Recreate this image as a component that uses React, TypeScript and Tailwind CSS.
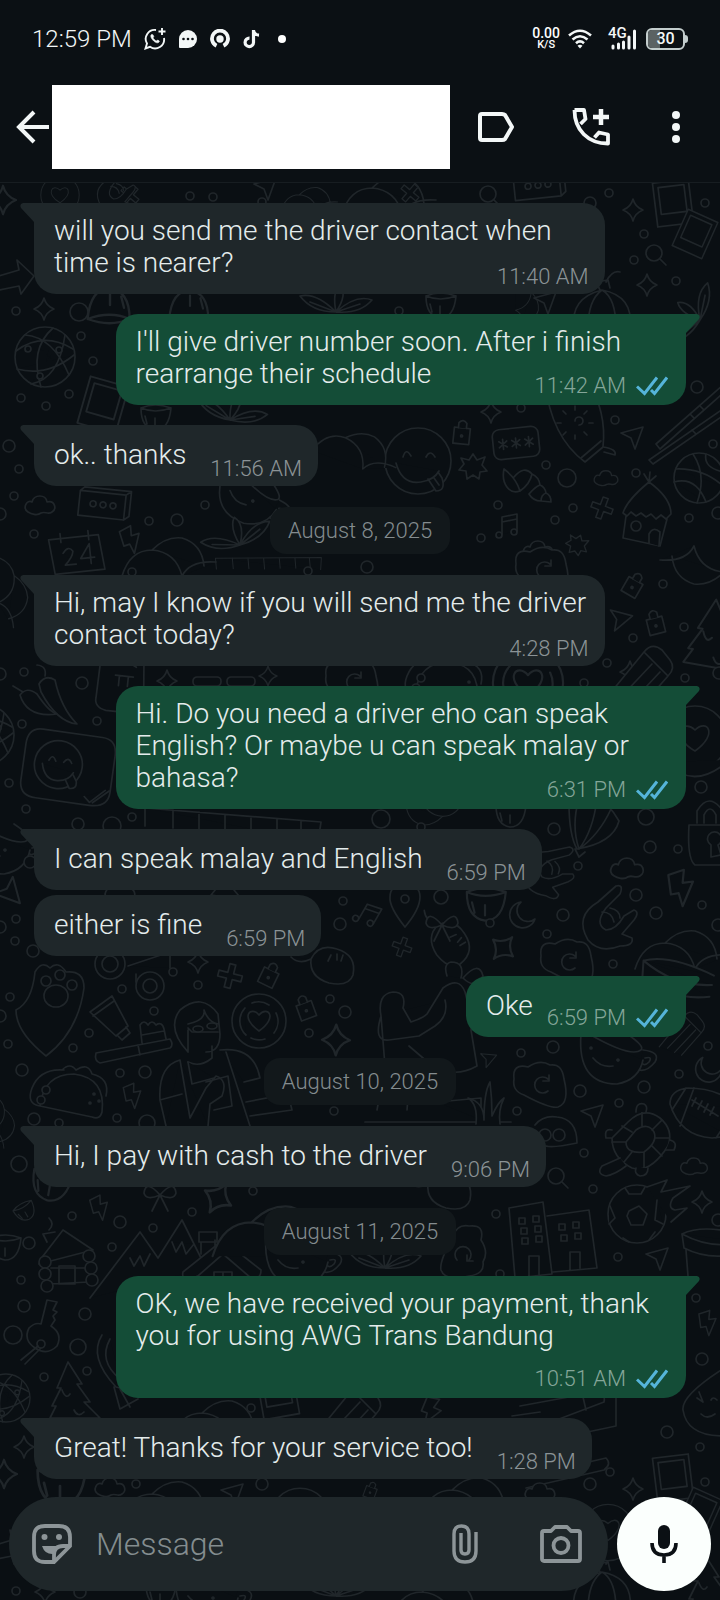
import { ReactNode } from "react";

type Message = {
 lines: string[];
 time: string;
 sent?: boolean;
 noTail?: boolean;
 timeBelow?: boolean;
};

type Group = { date?: string; messages: Message[] };

const groups: Group[] = [
 {
  messages: [
   { lines: ["will you send me the driver contact when", "time is nearer?"], time: "11:40 AM" },
   { lines: ["I'll give driver number soon. After i finish", "rearrange their schedule"], time: "11:42 AM", sent: true },
   { lines: ["ok.. thanks"], time: "11:56 AM" },
  ],
 },
 {
  date: "August 8, 2025",
  messages: [
   { lines: ["Hi, may I know if you will send me the driver", "contact today?"], time: "4:28 PM" },
   { lines: ["Hi. Do you need a driver eho can speak", "English? Or maybe u can speak malay or", "bahasa?"], time: "6:31 PM", sent: true },
   { lines: ["I can speak malay and English"], time: "6:59 PM" },
   { lines: ["either is fine"], time: "6:59 PM", noTail: true },
   { lines: ["Oke"], time: "6:59 PM", sent: true },
  ],
 },
 {
  date: "August 10, 2025",
  messages: [{ lines: ["Hi, I pay with cash to the driver"], time: "9:06 PM" }],
 },
 {
  date: "August 11, 2025",
  messages: [
   { lines: ["OK, we have received your payment, thank", "you for using AWG Trans Bandung"], time: "10:51 AM", sent: true, timeBelow: true },
   { lines: ["Great! Thanks for your service too!"], time: "1:28 PM" },
  ],
 },
];

// Wallpaper shapes, each drawn around 0,0
const shapes: Record<string, ReactNode> = {
 sparkle: <path d="M0-11Q2-3 10 0Q2 3 0 11Q-2 3-10 0Q-2-3 0-11Z" />,
 bolt: <path d="M-9-10L3-14L2-4L10-5L2 14L-1 4L-7 5Z" />,
 cloud: <path d="M-12 7C-18 3-13-6-8-3C-6-11 6-11 7-3C15-5 17 4 12 7C8 10 5 6 1 8C-3 11-9 9-12 7Z" />,
 plane: <path d="M-11-4L11-10L3 12L-1 1Z" />,
 moon: <path d="M-2-13A13 13 0 1 0 12 4A10 10 0 0 1-2-13Z" />,
 lock: (
  <>
   <path d="M-8-4H8V12H-8Z" />
   <path d="M-4-4V-9Q0-14 4-9V-4" />
   <circle cy="4" r="1" />
  </>
 ),
 cross: <path d="M-3-12H3V-3H12V3H3V12H-3V3H-12V-3H-3Z" />,
 glass: (
  <>
   <circle r="8" />
   <path d="M6 6L12 12" />
  </>
 ),
 photo: (
  <>
   <path d="M-18-22H18V22H-18Z" />
   <path d="M-13-17H13V10H-13Z" />
  </>
 ),
 tongue: (
  <>
   <circle r="33" />
   <path d="M-15-4Q-12-14-7-5M8-4Q12-12 17-4M-22 2Q-16 24 3 21Q16 19 21 10M10 18L18 30Q28 30 24 17L20 11M16 17L21 24" />
  </>
 ),
 globe: (
  <>
   <circle r="30" />
   <path d="M-20-22Q8-20 24 18M8-29Q-16-8-4 30M-29-6Q-2-26 28-8M-28 12Q2 20 29-2M-14 27Q14 22 20-22" />
   <circle cx="-17" cy="-8" r="3" />
   <circle cx="14" cy="-7" r="3" />
   <circle cx="-5" cy="19" r="3" />
  </>
 ),
 basketball: (
  <>
   <circle r="25" />
   <path d="M-23-9Q4-10 24 8M-6-24Q8-3-2 25M-25 4Q-3-2 7 24M7-24Q4-10 25-6" />
  </>
 ),
 password: (
  <>
   <rect x="-23" y="-15" width="46" height="30" rx="7" />
   <path d="M-13-5V5M-17-3L-9 3M-9-3L-17 3M0-5V5M-4-3L4 3M4-3L-4 3M13-5V5M9-3L17 3M17-3L9 3" />
  </>
 ),
 dotsBox: (
  <>
   <path d="M-26-12H20V13H-26ZM-26-12L-22-16H25L20-12M25-16V9L20 13" />
   <circle cx="-12" r="3" />
   <circle cx="-2" r="3" />
   <circle cx="8" r="3" />
  </>
 ),
 calendar: (
  <>
   <path d="M-26-15H24L27 20H-23Z" />
   <path d="M-14-20V-11M14-20V-11M-13 0Q-7-8-3-1Q-4 5-12 12H-1M14 13V-7L4 7H18" />
  </>
 ),
 shell: <path d="M-23-16C-26-2-18 10-7 6C-10-4-15-10-23-16ZM-13-8Q-3-20 5-11Q12-8 13 0Q18 2 19 8Q24 10 24 17L14 16Q6 16 2 9M5-11Q3-1-7 6M13 0Q8 2 2 9M19 8Q14 10 14 16" />,
 hut: (
  <>
   <path d="M-24 3Q-20-10 2-28M2-28Q24-12 24 4L19 9L14 5L9 9L4 4L-1 7L-6 3L-11 6L-16 2L-20 6L-24 3M-21 6L-24 28L13 36L20 9" />
   <path d="M2-28L-3-36M2-28L3-38M2-28L9-34" />
   <circle cx="-11" cy="16" r="5" />
   <path d="M2 33V24Q6 16 13 22L12 36" />
  </>
 ),
 note: (
  <>
   <path d="M-6 8V-9L9-12V5M-6-4L9-7" />
   <circle cx="-9" cy="9" r="3" />
   <circle cx="6" cy="6" r="3" />
  </>
 ),
 burst: <path d="M0-13L4-7L12-10L9-2L14 4L7 5L6 12L0 8L-6 12L-7 4L-14 3L-9-3L-12-9L-4-7Z" />,
 surf: (
  <>
   <path d="M-30-45Q-24 10 10 35L28 20Q32-15 12-48" />
   <path d="M6 31L26 14M28 20Q42 22 40 28L29 25" />
   <path d="M0-6A4 4 0 1 1 4-2M0-17V-21M0 12V8M-14-4H-18M14-4H18M-9-13L-12-16M9-13L12-16M-9 5L-12 8M9 5L12 8" />
  </>
 ),
 chopsticks: <path d="M-34 24L34-36L39-32L-30 29ZM-41 40L40-16L44-12L-37 44Z M0-6L4-2M10-14L14-10M2 10L6 14" />,
 chilli: (
  <>
   <path d="M-16-16Q-10-26 0-20Q6 8 22 24Q2 22-14-8Z" />
   <path d="M-35-5Q-28-14-18-6Q-6 12 2 14Q-28 18-35-5ZM-10-24Q-8-34-18-35M-32-8L-42-14" />
  </>
 ),
 sticker: (
  <>
   <path d="M-30-35H30Q45-35 45-18V18Q45 34 26 34H-28Q-45 34-45 18V-18Q-45-35-30-35Z" />
   <circle cx="-10" cy="-2" r="24" />
   <path d="M-20-5Q-17-13-13-5M-5-5Q-1-12 3-5M-26-1Q-22 15-9 14Q2 13 6 4M-1 12L4 20Q12 20 10 12L6 6M20 26L26 31L40 17M29 31L44 17" />
  </>
 ),
 crossword: <path d="M-90-14L86 0L83 20M-90-14V4M-62-12V6M-36-10V8M-10-7V11M16-5V12M42-3V14M66-1V16" />,
 pill: <rect x="-14" y="-4" width="28" height="9" rx="4" />,
 catcard: <path d="M-24-30H18L24 32H-14Q-26 30-25 20ZM-12-20L-6-17L-12-14M12-20L6-17L12-14M-8-4H10M-4-4V6M5-4V6" />,
 eraser: <path d="M-34 24L2-20Q10-30 20-22L28-12Q34-4 26 4L-2 36M2-20L26 4M-22 26L10-8M-12 32L18 0" />,
 heartMug: (
  <>
   <circle r="32" />
   <path d="M0 13C-26-2-12-20 0-8C12-20 24-4 0 13Z" />
   <path d="M-31 24Q0 54 34 22" />
  </>
 ),
 padlock: (
  <>
   <path d="M-24-10H24V30H-18Q-26 24-24-10ZM-16-12V-24Q-4-44 10-24V-12M-9-12V-20Q-3-32 3-20V-12" />
   <path d="M-2 22V10A7 7 0 1 1 5 10L8 20Z" />
  </>
 ),
 pin: (
  <>
   <path d="M0 22Q-16 2-15-8A15 15 0 0 1 15-8Q15 4 0 22Z" />
   <circle cy="-6" r="4" />
  </>
 ),
 rock: <path d="M-20 20Q-34-4-10-18L8-34Q16-36 12-26L-2-12Q-14 4-2 10Q8 10 16-4L26-10Q32-8 26 0L14 14L24 18Q26 26 12 26Q-8 34-20 20ZM-6-8Q4-8 6 2M2-12Q12-10 12-2" />,
 balloon: <path d="M-24-22Q-24 10-16 24Q20 18 26-4Q6-40-24-22M-14-26Q-22 0-14 24M4-26Q0 6-14 24M18-16Q6 10-14 24M-18 24L-14 32L-8 27" />,
 domes: <path d="M-48 24Q-40-2-18-2Q6 0 12 24M-18-2Q-4-16 12-14Q32-8 34 14M12 24Q20 8 46 10" />,
 paw: (
  <>
   <path d="M-15-38Q-8-50 0-42Q8-50 16-38Q34-40 34-22Q28 22-4 46Q-34 22-34 0Q-18-8-15-38Z" />
   <ellipse cx="6" cy="-14" rx="12" ry="11" />
   <circle cx="-4" cy="-29" r="5" />
   <circle cx="10" cy="-35" r="5" />
   <circle cx="22" cy="-25" r="5" />
  </>
 ),
 tube: <path d="M-22-6L0-22L16 8L4 18ZM-19-2L2-17M6 18L10 22L18 15L14 9" />,
 taco: (
  <>
   <path d="M-30 14Q-26-18 4-18Q36-14 32 20Q30 28 22 25ZM-30 14Q-44 12-38-4Q-30-24-6-22M-8-22Q0-30 6-22Q18-30 22-18Q40-14 36 4" />
   <circle cx="24" cy="2" r="1" />
   <circle cx="20" cy="11" r="1" />
   <circle cx="29" cy="9" r="1" />
   <circle cx="-24" cy="-2" r="4" />
   <circle cx="-29" cy="8" r="4" />
  </>
 ),
 brush: <path d="M-38 0L36-14Q40-8 36-5L-34 10Q-40 8-38 0ZM4-8L6 2M8-10L6-28Q10-34 14-28Q18-34 22-28Q28-32 30-24L32-14M8-18L30-22" />,
 reader: (
  <>
   <path d="M-12-8Q-34-32-20-50Q2-68 18-46L20-26Q20-8 6-8M-12-30V-8M-12 2Q0 8 12-2V-14M-12-32L-8-28H18M-12-36Q6-40 4-50Q8-38 18-36" />
   <ellipse cx="-2" cy="-31" rx="5" ry="3" />
   <ellipse cx="12" cy="-34" rx="5" ry="3" />
   <path d="M-20 0Q-42 6-40 40L-34 66M20-10Q54-14 60 18L44 22M-20 0L-10 58L6 28L16 16Q28 20 22 36L10 44L8 66M26-8L50 66M-12 2L-8 24L14 18M6 22L28 16L32 46L14 50M-40 40L-18 34M46 42L88 34L92 50L50 56" />
  </>
 ),
 heartCoin: (
  <>
   <circle r="27" />
   <path d="M-13 14A19 19 0 0 1-14-13M-7-18A19 19 0 0 1 10-16M17-8A19 19 0 0 1 15 12M6 18A19 19 0 0 1-8 17M0 10C-20-4-8-16 0-6C8-16 20-4 0 10Z" />
  </>
 ),
 camera: (
  <>
   <circle cx="-26" r="15" />
   <circle cx="-26" r="8" />
   <circle cx="14" cy="22" r="14" />
   <circle cx="14" cy="22" r="7" />
   <path d="M-8 2L34-12V4M0 10V18" />
  </>
 ),
 bag: <path d="M-22-8Q-14-24 4-18Q24-12 20 8Q16 20-4 16Q-24 10-22-8ZM-2-12L-5-6M4-13V-7M10-12L8-6M-22-8Q-34-2-42-10" />,
 tree: <path d="M0-30L14-8L9-8L22 10L16 10L32 26H-18L-12 14L-16 14L-7-4L-11-4ZM-6-2Q-2 8 2 2M6 18Q10 26 16 20" />,
 hills: <path d="M-50 36L0-30L18-4L42-42L66 6M-10-4L-6 4L0-6L4 4L10-8M32-20L36-10L42-20L46-8L54-18" />,
 cottage: <path d="M-40 10L0-22L38 8Q38 18 28 16L0-8L-32 20Q-42 18-40 10ZM-26 14V36M26 14V36M-9 10H9V28H-9ZM0 10V28M-9 19H9M-22-8V-20M-8-16V-22M-24-20H-6V-30H-24Z" />,
 cabin: (
  <>
   <path d="M-24 0L-4-26L26-6L-28 8ZM-20-14L-24-22L-12-24M-18-26Q-12-32-18-38M-16 12H20M-18 28L22 26M-8 10H8V28H-8Z" />
   <circle cx="-22" cy="6" r="6" />
   <circle cx="-22" cy="18" r="6" />
   <circle cx="-20" cy="30" r="6" />
   <circle cx="22" cy="0" r="6" />
   <circle cx="24" cy="12" r="6" />
   <circle cx="25" cy="24" r="6" />
  </>
 ),
 egg: (
  <>
   <path d="M-24-6Q-26-22-10-18Q2-26 12-20Q24-22 26-6Q32 18 20 22Q12 24-14 10Q-26 6-24-6Z" />
   <path d="M10-6A8 8 0 1 0 10 6M11-10V-4H5" />
  </>
 ),
 cup: (
  <>
   <path d="M-34-26Q-38 24 2 24Q24 20 28 0M-26-26Q16-2 26-10Q30-14 12-26M28-10Q46-8 40 2Q32 12 24 10M30-2Q38-4 34 2Q30 6 28 4M-22-2Q-14 8-2 6" />
   <circle cx="-24" cy="-12" r="1" />
   <circle cx="3" r="1" />
  </>
 ),
 football: <path d="M-30-8Q-30-22-12-24Q20-24 40-4M-30-8Q-20 24 12 26L30 24M-14-24L-28-2M-6-24L-20 14M36-4L16 26M-8-12L18 4M-4-14L-8-6M2-11L-2-3M8-8L4 0M14-5L10 3" />,
 turtle: (
  <>
   <path d="M-12-18Q4-34 20-22Q34-10 28 6Q10 34-8 28Q-28 18-28-2Z" />
   <path d="M-4-10Q8-18 14-8Q18 2 4 12Q-14 14-14 2ZM2-29V-14M-18-14L-8-8M-28 2H-14M-16 22L-8 12M4 28V12M22 16L12 6M29-2L15-2M22-20L12-10" />
   <path d="M-4-28Q-4-38 4-36Q8-34 6-28M-28-10Q-36-12-34-2H-28M30 0Q38 2 34 10L26 10M8 28Q8 36 0 36Q-6 34-4 28M-20 18L-38 26Q-44 34-34 36Q-24 34-14 26" />
  </>
 ),
 soccer: (
  <>
   <circle r="29" />
   <path d="M-8-3L2-8L10 0L6 11H-6L-10 2ZM-12-26L-8-20L4-20L8-27M20-14L18 6L26 10M-27-8L-22 4L-28 10M-14 24L-8 28M12 26L18 18M10-27L30-34L24-22L53-28L36-16Q30-6 38-4L50-6L34 8" />
  </>
 ),
 buildings: <path d="M-44-30L-10-36L-1 36L-38 40ZM-6-22L36-28L44 30L0 34M-34-20H-28V-14H-34ZM-20-22H-14V-16H-20ZM-32-10H-26V-4H-32ZM-18-12H-12V-6H-18ZM-31 0H-25V6H-31ZM-17-2H-11V4H-17ZM6-14H12V-8H6ZM20-16H26V-10H20ZM8-3H14V3H8ZM22-5H28V1H22ZM-24 38V18H-14V36M17 32V14H27V30" />,
 bucket: <path d="M-20-8Q0-18 40-8M-20-8L-18 6Q10 20 40 10M-20-8Q10 8 40 0M-16 8L-14 34" />,
 ghost: (
  <>
   <path d="M-22-8Q-14-18 0-16Q20-14 20 10Q-8 16-14 12" />
   <circle cx="-12" cy="2" r="6" />
   <circle cx="2" cy="2" r="6" />
  </>
 ),
 grass: <path d="M-14 22Q-12 2-22-4Q-6 0-6 18Q-6-10 0-20Q2-4 2 14Q8 0 14-4Q8 8 10 22" />,
 woman: <path d="M-40 30L-44-20Q-48-42-32-44Q-18-44-22-28L-14-14Q-2-18 2-22L18-48Q34-60 40-44Q48-14 46-6L52 30Q34 40 18 34L12 66M20-36Q24-20 10-10L-6 0L-36 4Q-52 6-44-20M-16 10L12 34M8 36L-14 24L-18 74M-40 30L-48 74M22-60Q18-72 26-74Q40-74 36-58M38-58Q54-76 58-60Q50-46 38-58M12 66L56 62V84M-60 86H86" />,
 key: (
  <>
   <path d="M-14-2Q-8-8-2-6L4-30L14-28L10-20L14-18L10-14L12-10L8-4Q20 4 14 16Q4 26-8 18Q-20 10-14-2Z" />
   <circle cx="-2" cy="14" r="4" />
   <path d="M-5 16L-22 30M-2 18L-18 34" />
  </>
 ),
 hotair: <path d="M-20-30Q-34-8-6 22L10 26M-12-26Q-24-4-2 14M-8 22L-2 44L16 34M-2 24L8 42" />,
 board: <path d="M-40-10L36-24Q46-24 44-14L-30 14M-48 0L-20-4M-38-20L40-34Q56-36 56-20V10L-20 26M20-32L26-6M-40 62L46 42Q52 48 44 54L-34 72M-20 26L-4 50" />,
 baby: (
  <>
   <circle r="16" />
   <path d="M14-36Q-26-10-24 4Q-20 30 16 30M-10-8L-4-4L-8-14M4-6Q6-10 10-6M-6 8Q0 14 8 8" />
  </>
 ),
 arrow: <path d="M-18-4L2-10L0-20L17-4L4 14L2 6L-18 10" />,
 mug: <path d="M-14-10Q0-16 16-10Q14 12 0 12Q-14 10-14-10ZM-14-10Q0-4 16-10M-10-2L-8 6M0 0V8" />,
 leaf: <path d="M0 0Q-20-20-36-16Q-24 0 0 0Q-4-20 4-28Q12-18 0 0Q20-18 36-12Q24 2 0 0M-26-10L0 0M24-8L0 0" />,
 pumpkin: <path d="M-28 22Q-32-8 0-16Q32-10 28 22M-14 22Q-14-6 0-16Q14-8 14 22M-2-16L-6-24L6-26L8-18M4-24Q10-36 18-34" />,
 bow: <path d="M0 0Q-14-16-16-2Q-14 6 0 0Q14-16 16-2Q14 6 0 0L-8 16M0 0L8 16" />,
};

const doodles: [string, number, number, number?, number?][] = [
 ["sparkle", 44, 309], ["sparkle", 633, 210], ["sparkle", 647, 285], ["sparkle", 491, 412], ["sparkle", 167, 681],
 ["sparkle", 630, 672], ["sparkle", 336, 1040, 1, 1.4], ["sparkle", 198, 962], ["sparkle", 702, 1202], ["sparkle", 24, 1447], ["sparkle", 633, 1489],
 ["sparkle", 45, 1592], ["sparkle", 3, 200, 0, 1.3], ["sparkle", 4, 1474, 0, 1.3],
 ["globe", 45, 357], ["arrow", 17, 280], ["mug", 155, 418], ["leaf", 336, 312], ["pumpkin", 602, 306], ["pumpkin", 602, 1588],
 ["leaf", 60, 235, 70], ["leaf", 700, 320, -60], ["leaf", 230, 420, 10], ["mug", 190, 306, 180, 1.3], ["mug", 110, 305, 180, 1.4],
 ["photo", 673, 203, -7], ["photo", 695, 234, 24, 0.9], ["photo", 673, 1478, -7], ["photo", 700, 1512, 24, 0.9], ["photo", 103, 405, 16, 1.1],
 ["glass", 654, 253], ["tongue", 418, 461], ["lock", 462, 432, 6], ["password", 516, 443, -6], ["surf", 575, 427],
 ["plane", 632, 437], ["chopsticks", 690, 420], ["basketball", 699, 478], ["burst", 473, 467], ["shell", 527, 485],
 ["cross", 130, 195, 40, 0.8], ["cross", 602, 508, 20, 0.9], ["hut", 647, 510], ["note", 508, 526], ["cloud", 40, 505],
 ["cloud", 606, 478, 0, 0.8], ["dotsBox", 105, 505, 6], ["calendar", 76, 552, -6], ["bolt", 130, 540, -10], ["domes", 170, 552],
 ["cup", 250, 500, 20], ["domes", 360, 445, 20, 0.9], ["leaf", 240, 545, -20], ["cloud", 538, 550], ["burst", 577, 545, 20, 0.8],
 ["crossword", 270, 562, -5, 0.6], ["egg", 540, 570], ["domes", 15, 590, 80, 0.8], ["lock", 634, 584, 30], ["lock", 655, 622, -14],
 ["plane", 618, 619, 30], ["tree", 710, 635, 10, 1.2], ["domes", 706, 570, 180], ["chilli", 55, 700], ["catcard", 123, 680, 6],
 ["pill", 207, 681], ["pill", 241, 681], ["sparkle", 268, 676, 0, 0.9], ["egg", 350, 682], ["heartCoin", 528, 683, 0, 1.3], ["taco", 445, 680],
 ["eraser", 642, 672], ["heartMug", 695, 738], ["sticker", 68, 768, 8], ["globe", -16, 735], ["crossword", 235, 822],
 ["balloon", 593, 825], ["padlock", 713, 835], ["cloud", 627, 868, 0, 1.1], ["bolt", 680, 888, 0, 1.3], ["rock", 548, 870, 30, 0.9],
 ["domes", 430, 815, 180, 0.7], ["mug", 510, 815], ["mug", 485, 905, 0, 1.3], ["plane", 8, 890, 90, 1.2], ["cup", 2, 850], ["cloud", 120, 892],
 ["burst", 225, 892], ["pin", 405, 905], ["note", 368, 915, 30], ["moon", 523, 915], ["rock", 608, 920], ["domes", 683, 945],
 ["bag", 450, 945, 40], ["bow", 442, 925], ["cross", 402, 947, 20, 0.8], ["sparkle", 503, 948, 40, 1.3], ["egg", 565, 962], ["bucket", 665, 975, 12, 1.2],
 ["paw", 50, 1010], ["camera", 136, 964], ["cross", 230, 976, 14], ["lock", 270, 974, 26], ["lock", 305, 1007, -20], ["bag", 333, 967],
 ["tube", 112, 1018], ["brush", 134, 1053], ["reader", 200, 1060], ["heartCoin", 259, 1021], ["taco", 70, 1092], ["woman", 425, 1036],
 ["bolt", 132, 1096, -4, 0.9], ["grass", 490, 1102], ["domes", 5, 1120, 80, 0.6], ["plane", 487, 1059, 20, 0.7], ["egg", 538, 1085],
 ["cup", 615, 1060], ["eraser", 683, 1030, 0, 0.7], ["moon", 709, 1069, -20], ["football", 700, 1112], ["plane", 592, 1115], ["turtle", 640, 1140],
 ["ghost", 557, 1133], ["glass", 556, 1176], ["cloud", 694, 1166, 0, 0.9], ["soccer", 637, 1214], ["buildings", 553, 1238],
 ["bucket", 702, 1242], ["mug", 50, 1185, 10, 1.3], ["bow", 160, 1195], ["sparkle", 218, 1198, 30, 1.5], ["bolt", 99, 1208, -8, 0.9],
 ["mug", 25, 1212, -30, 0.7], ["cabin", 67, 1256], ["hills", 140, 1262], ["cottage", 223, 1262], ["bag", 450, 1192], ["domes", 275, 1225, 0, 1.3],
 ["egg", 463, 1250, 90], ["plane", 657, 1258], ["leaf", 385, 1268], ["cup", 300, 1262], ["mug", 5, 1248], ["key", 43, 1330],
 ["bolt", 707, 1323, 0, 0.9], ["tree", 68, 1392], ["globe", 6, 1398, 0, 0.8], ["hotair", 122, 1365], ["board", 560, 1416], ["baby", 707, 1406],
 ["domes", 220, 1415], ["eraser", 350, 1410], ["bolt", 430, 1410, 30], ["photo", 278, 1395, -10], ["mug", 60, 1486, 0, 1.6], ["cloud", 110, 1487],
 ["domes", 170, 1496], ["plane", 232, 1494], ["tongue", 300, 1518, 0, 0.9], ["lock", 371, 1490, 20, 0.7], ["domes", 470, 1492], ["cloud", 540, 1492],
 ["heartMug", 608, 1530, 0, 0.8], ["arrow", 10, 1550], ["mug", 160, 1594], ["cup", 210, 1598], ["leaf", 336, 1596], ["domes", 440, 1594], ["tree", 705, 1585],
 ["heartMug", 60, 195, 0, 0.6], ["rock", 115, 192, 0, 0.7], ["plane", 265, 188], ["domes", 310, 196, 0, 0.6], ["domes", 390, 190], ["cross", 410, 193, 40, 0.8],
 ["glass", 488, 194], ["dotsBox", 540, 185, -6], ["domes", 530, 303, 90, 0.6], ["mug", 440, 306], ["plane", 545, 302],
];

const dots: [number, number, number?][] = [
 [190, 196], [213, 197], [262, 202], [16, 311], [79, 312, 9], [81, 336], [93, 361], [21, 398], [46, 406], [69, 394], [9, 446, 6], [19, 469],
 [14, 496], [205, 505], [149, 521], [177, 520, 6], [34, 534], [0, 514, 6], [609, 193], [590, 203, 6], [644, 234], [634, 260],
 [705, 203], [676, 281], [399, 311], [697, 387, 6], [615, 420], [521, 408], [546, 465], [567, 478, 9], [636, 473], [713, 444],
 [498, 505], [573, 508], [555, 520], [481, 538], [689, 518], [718, 513, 6], [132, 572], [308, 571], [367, 567, 6], [24, 672],
 [82, 683, 6], [97, 721], [22, 724], [9, 783], [26, 809], [78, 824, 6], [132, 817], [112, 826, 9], [30, 862, 6], [0, 674, 6],
 [16, 919], [343, 901], [340, 924, 6], [15, 941], [33, 951, 6], [0, 927, 6], [663, 584], [684, 627], [633, 638], [607, 663],
 [685, 678], [584, 683], [719, 673, 6], [701, 787, 6], [646, 817, 8], [554, 829, 6], [650, 847, 6], [678, 849], [578, 866],
 [381, 819, 9], [421, 827], [441, 897, 7], [636, 895, 6], [563, 915, 6], [656, 913, 6], [490, 923], [547, 934], [702, 905], [718, 925, 6],
 [173, 972], [122, 989], [198, 985], [154, 1011], [10, 997], [0, 1016, 6], [89, 1033], [73, 1048], [8, 1044], [22, 1070, 6],
 [120, 1073], [145, 1072, 6], [34, 1119, 6], [117, 1118], [59, 1123], [147, 1123, 8], [330, 999], [345, 1012, 6], [309, 1033],
 [334, 1111], [19, 1164, 8], [253, 1191], [72, 1216], [120, 1222, 6], [192, 1212], [153, 1228], [112, 1247], [29, 1243, 6],
 [613, 964], [521, 1053], [553, 1047, 6], [708, 1046], [580, 1091, 6], [644, 1087, 6], [679, 1074], [619, 1103], [517, 1111],
 [584, 1153], [593, 1189], [496, 1214], [618, 1257], [718, 1220, 6], [21, 1280], [24, 1306, 6], [85, 1314, 6], [13, 1335, 9],
 [78, 1347, 8], [44, 1377], [87, 1371], [251, 1408], [262, 1484, 6], [136, 1484], [500, 1274], [696, 1298], [702, 1359, 6],
 [667, 1432, 6], [590, 1484, 6], [700, 1447], [610, 1472], [705, 1482], [16, 1591], [80, 1592, 6],
];

function Wallpaper() {
 return (
  <svg
   aria-hidden="true"
   className="absolute inset-0 h-full w-full"
   viewBox="0 0 720 1600"
   preserveAspectRatio="xMidYMin slice"
   fill="#0a0f13"
   stroke="#20262a"
   strokeWidth="1.7"
   strokeLinejoin="round"
   strokeLinecap="round"
  >
   {doodles.map(([name, x, y, rotate = 0, scale = 1], i) => (
    <g key={i} transform={`translate(${x} ${y}) rotate(${rotate}) scale(${scale})`}>
     {shapes[name]}
    </g>
   ))}
   {dots.map(([x, y, r = 4], i) => (
    <circle key={i} cx={x} cy={y} r={r} />
   ))}
  </svg>
 );
}

function StatusBar() {
 return (
  <div className="flex h-[77px] items-center justify-between px-8">
   <div className="flex items-center gap-3">
    <span className="text-2xl font-light">12:59 PM</span>
    <svg width="22" height="22" viewBox="0 0 22 22" fill="none" stroke="currentColor" strokeWidth="1.9">
     <path d="M12 2A9 9 0 0 0 3 15.500L1.500 20.500L6 18.800A9 9 0 0 0 20 10" />
     <path d="M18 0V7M14.500 3.500H21.500" />
     <path d="M7.500 6.500C6.500 7 6.500 9 8 11C10 14 13 15.500 14.500 14.500C15.500 13.800 15.500 13 15 12.700L13.500 12L12.500 13C11 12.500 9.500 11 9 9.800L9.800 8.800L9 6.800Z" fill="currentColor" strokeWidth="0.600" />
    </svg>
    <svg width="20" height="20" viewBox="0 0 20 20">
     <path d="M10 1A9 9 0 1 1 10 19H2Q1 19 1 18V10A9 9 0 0 1 10 1Z" fill="currentColor" />
     <g fill="#0b1014"><circle cx="5.500" cy="10" r="1.300" /><circle cx="10" cy="10" r="1.300" /><circle cx="14.500" cy="10" r="1.300" /></g>
    </svg>
    <svg width="20" height="20" viewBox="0 0 20 20" fill="none" stroke="currentColor">
     <path d="M6.500 16.800A8 8 0 1 1 13.500 16.800" strokeWidth="3.800" />
     <circle cx="10" cy="10" r="3.700" fill="currentColor" stroke="none" />
    </svg>
    <svg width="20" height="20" viewBox="0 0 20 20" fill="none" stroke="currentColor" strokeWidth="3.200">
     <path d="M11.500 1V13.500A4.200 4.200 0 1 1 7.500 9.200M11.500 1.500Q12.500 5.800 17 6.200" />
    </svg>
    <span className="ml-1 h-2 w-2 rounded-full bg-white" />
   </div>
   <div className="flex items-center">
    <div className="mr-2 text-center font-medium text-white">
     <div className="text-sm leading-3">0.00</div>
     <div className="text-[11px] leading-3">K/S</div>
    </div>
    <svg width="24" height="20" viewBox="0 0 24 20" fill="none" stroke="currentColor" strokeWidth="2.600">
     <path d="M1 6.500Q12-3 23 6.500M4.500 10.500Q12 4 19.500 10.500M8 14.200Q12 10.500 16 14.200" />
     <path d="M12 19.500L9.500 16.800Q12 14.800 14.500 16.800Z" fill="currentColor" stroke="none" />
    </svg>
    <div className="relative ml-4 h-6 w-7">
     <span className="absolute top-0 left-0 text-[15px] leading-3 font-medium">4G</span>
     <svg width="28" height="24" viewBox="0 0 28 24" fill="none" stroke="currentColor" strokeWidth="3" strokeLinecap="round">
      <path d="M5 19V21M10.500 17V21M15.500 15V21M21 10V21M26.500 4V21" />
     </svg>
    </div>
    <div className="ml-2.5 flex items-center">
     <div className="relative flex h-[22px] w-[39px] items-center justify-center overflow-hidden rounded-md border-2 border-[#c3cdcd] text-base leading-4 font-medium">
      <span className="absolute inset-y-0 left-0 w-3 bg-[#5b6263]" />
      <span className="relative">30</span>
     </div>
     <span className="h-2 w-[3px] rounded-r bg-[#c3cdcd]" />
    </div>
   </div>
  </div>
 );
}

function Header() {
 return (
  <header className="relative border-b border-[#171d21] bg-[#0b1014] text-[#f3f7f7]">
   <StatusBar />
   <div className="flex items-center pt-2 pb-[13px] pl-4">
    <button aria-label="Back" className="flex h-9 w-9 shrink-0 items-center">
     <svg width="34" height="34" viewBox="0 0 34 34" fill="none" stroke="currentColor" strokeWidth="4">
      <path d="M33 17H4M18 2L3 17L18 32" />
     </svg>
    </button>
    <div className="h-[84px] flex-1 bg-white" />
    <div className="flex w-[270px] items-center pl-7">
     <button aria-label="Label chat">
      <svg width="36" height="30" viewBox="0 0 36 30" fill="none" stroke="currentColor" strokeWidth="4" strokeLinejoin="round">
       <path d="M4 2H24Q26 2 27 3L34 15L27 27Q26 28 24 28H4Q2 28 2 26V4Q2 2 4 2Z" />
      </svg>
     </button>
     <button aria-label="Call" className="ml-[58px]">
      <svg width="38" height="38" viewBox="0 0 38 38" fill="none" stroke="currentColor" strokeWidth="3.800" strokeLinejoin="round">
       <path d="M2.500 2H12L13.500 11L8.500 16M2.500 2C2.500 22 16 35.500 36 35.500V26.500L27 24.500L22.500 29.500" />
       <path d="M29 1V17M21 9H37" strokeWidth="4.500" />
      </svg>
     </button>
     <button aria-label="More options" className="ml-[61px]">
      <svg width="10" height="34" viewBox="0 0 10 34" fill="currentColor">
       <circle cx="5" cy="5" r="4" />
       <circle cx="5" cy="17" r="4" />
       <circle cx="5" cy="29" r="4" />
      </svg>
     </button>
    </div>
   </div>
  </header>
 );
}

function Checks() {
 return (
  <svg width="32" height="20" viewBox="0 0 32 20" fill="none" stroke="#55b4d9" strokeWidth="3">
   <path d="M1 10.500L8.500 17.500L21 1.500M15 14L18.500 17.500L31 1.500" />
  </svg>
 );
}

function Bubble({ lines, time, sent, noTail, timeBelow }: Message) {
 const multi = lines.length > 1;
 const above = timeBelow ? lines : lines.slice(0, -1);
 const last = timeBelow ? null : lines[lines.length - 1];

 return (
  <div className={sent ? "flex justify-end" : "flex"}>
   <div
    className={`relative rounded-[22px] pl-5 text-[28px] leading-8 font-light text-[#e4ecec] ${
     sent ? "bg-[#144d37] pr-[18px] pb-[7px]" : "bg-[#1f272a] pr-4 pb-[5px]"
    } ${noTail ? "" : sent ? "rounded-tr-none" : "rounded-tl-none"} ${
     multi ? "w-7/8 pt-3" : "pt-[14px]"
    }`}
   >
    {!noTail && (
     <svg
      width="16"
      height="22"
      viewBox="0 0 16 22"
      className={sent ? "absolute top-0 -right-[14px]" : "absolute top-0 -left-[14px] -scale-x-100"}
      fill={sent ? "#144d37" : "#1f272a"}
     >
      <path d="M0 0H13Q17 1 15 5L2 19V22H0Z" />
     </svg>
    )}
    {above.map((line) => (
     <p key={line}>{line}</p>
    ))}
    <div
     className={`flex items-end ${last ? "justify-between" : "justify-end pt-[15px]"} ${
      sent ? "gap-3.5" : "gap-6"
     }`}
    >
     {last && <p className={sent ? "pb-2" : "pb-2.5"}>{last}</p>}
     <div
      className={`flex items-center gap-2.5 text-[22px] leading-6 ${
       sent ? "text-[#84a699]" : "text-[#8b9396]"
      }`}
     >
      <time>{time}</time>
      {sent && <Checks />}
     </div>
    </div>
   </div>
  </div>
 );
}

function Composer() {
 return (
  <footer className="relative mt-auto flex items-center gap-[9px] px-[9px] pb-[9px]">
   <div className="flex h-[94px] min-w-0 flex-1 items-center rounded-full bg-[#1f272a] pr-[26px] pl-[23px] text-[#8d9598]">
    <button aria-label="Stickers">
     <svg width="40" height="40" viewBox="0 0 40 40" fill="none" stroke="currentColor" strokeWidth="3.800">
      <path d="M13 2H27Q38 2 38 13V22L22 38H13Q2 38 2 27V13Q2 2 13 2Z" />
      <path d="M38 22H31Q22 22 22 31V38" />
      <g fill="currentColor" stroke="none"><circle cx="12.500" cy="13" r="3" /><circle cx="27" cy="13" r="3" /><path d="M10 22H25Q22 24 22 30Q13 31 10 22Z" /></g>
     </svg>
    </button>
    <input
     aria-label="Message"
     placeholder="Message"
     className="ml-6 min-w-0 flex-1 bg-transparent text-[32px] font-light outline-none placeholder:text-[#848d8f]"
    />
    <button aria-label="Attach">
     <svg width="26" height="40" viewBox="0 0 26 40" fill="none" stroke="currentColor" strokeWidth="3.400">
      <path d="M24 8V27Q24 38 13 38Q2 38 2 27V10Q2 2 9.500 2Q17 2 17 10V26Q17 30 13 30Q9 30 9 26V9" />
     </svg>
    </button>
    <button aria-label="Camera" className="ml-[62px]">
     <svg width="42" height="38" viewBox="0 0 42 38" fill="none" stroke="currentColor" strokeWidth="3.800" strokeLinejoin="round">
      <path d="M4 6H11L15 2H27L31 6H38Q40 6 40 8V34Q40 36 38 36H4Q2 36 2 34V8Q2 6 4 6Z" />
      <circle cx="21" cy="20.500" r="7.500" />
     </svg>
    </button>
   </div>
   <button aria-label="Record voice message" className="flex h-[94px] w-[94px] items-center justify-center rounded-full bg-[#fbfffd] text-[#0b1014]">
    <svg width="28" height="38" viewBox="0 0 28 38" fill="none" stroke="currentColor" strokeWidth="3.600">
     <rect x="8" y="0" width="12" height="24" rx="6" fill="currentColor" stroke="none" />
     <path d="M2 18Q2 30 14 30Q26 30 26 18M14 30V38" />
    </svg>
   </button>
  </footer>
 );
}

export default function App() {
 return (
  <main className="relative flex min-h-screen flex-col overflow-hidden bg-[#0a0f13] font-[Roboto,'Liberation_Sans',sans-serif]">
   <Wallpaper />
   <Header />
   <section className="relative flex flex-col gap-5 px-[34px] pt-5 pb-4">
    {groups.map((group, i) => (
     <div key={i} className="flex flex-col gap-5">
      {group.date && (
       <div className="my-px flex h-[47px] items-center self-center rounded-2xl bg-[#12181b] px-[18px] text-[22px] font-light text-[#848c8f]">
        {group.date}
       </div>
      )}
      {group.messages.map((message) => (
       <div key={message.lines[0]} className={message.noTail ? "-mt-[15px]" : ""}>
        <Bubble {...message} />
       </div>
      ))}
     </div>
    ))}
   </section>
   <Composer />
  </main>
 );
}
